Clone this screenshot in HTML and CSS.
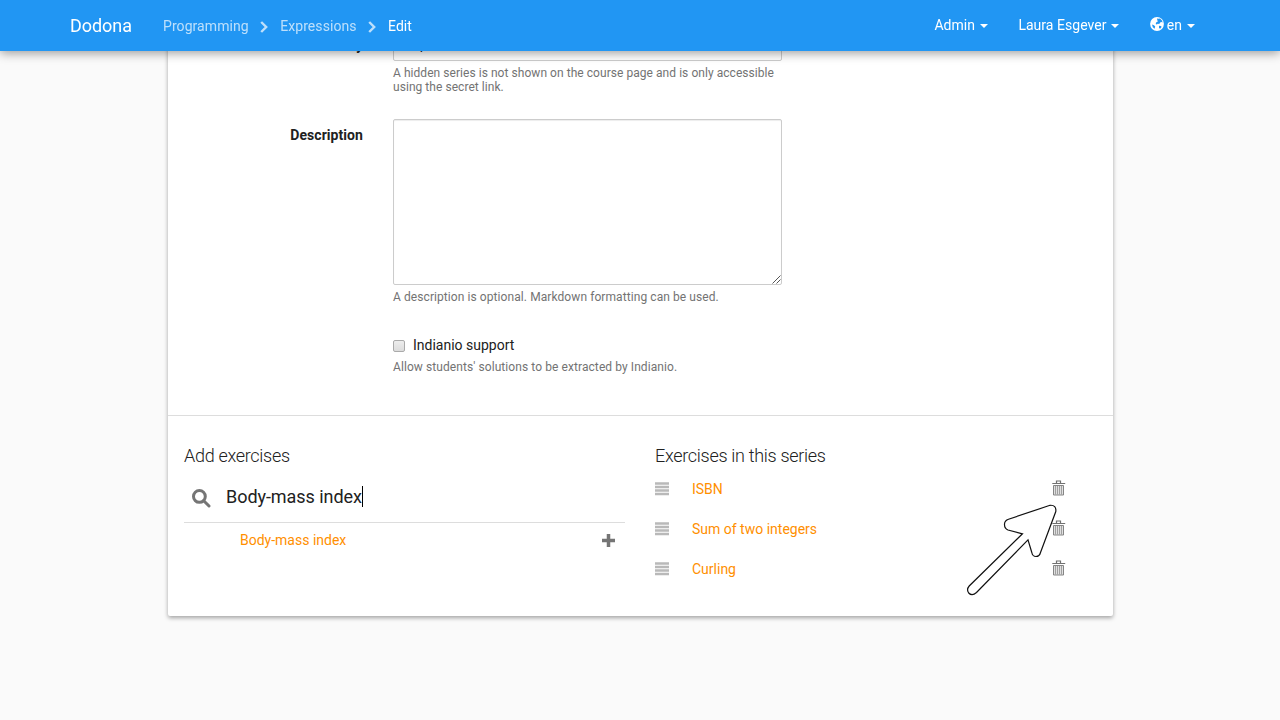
FILE: index.html
```html
<!DOCTYPE html>
<html lang="en">
<head>
<meta charset="utf-8">
<title>Edit - Dodona</title>
<link rel="stylesheet" href="styles.css">
</head>
<body>
<svg class="defs" width="0" height="0">
  <symbol id="bars" viewBox="0 0 14 14"><path d="M0 .3h14v2.500H0zM0 3.800h14v2.500H0zM0 7.300h14v2.500H0zM0 10.800h14v2.500H0z"/></symbol>
  <symbol id="trash" viewBox="0 0 14 16"><path d="M4.500 3V1h4v2M.3 3.500h12.900" fill="none" stroke="#707070" stroke-width="1.2"/><path d="M1.500 5.500h10v9.500h-10z" fill="#e0e0e0" stroke="#858585"/><path d="M3.500 6v8.500M5.500 6v8.500M7.500 6v8.500M9.500 6v8.500" stroke="#999" stroke-width=".9"/></symbol>
</svg>
<nav class="navbar">
  <div class="nav-left">
    <a class="brand">Dodona</a>
    <a class="crumb">Programming</a>
    <svg class="chevron" width="8" height="12" viewBox="0 0 8 12"><path d="M1.200 1l5 5-5 5"/></svg>
    <a class="crumb">Expressions</a>
    <svg class="chevron" width="8" height="12" viewBox="0 0 8 12"><path d="M1.200 1l5 5-5 5"/></svg>
    <a class="crumb current">Edit</a>
  </div>
  <div class="nav-right">
    <a>Admin<span class="caret"></span></a>
    <a>Laura Esgever<span class="caret"></span></a>
    <a><svg class="globe" width="14" height="14" viewBox="0 0 14 14"><circle cx="7" cy="7" r="6.900" fill="#fff"/><path d="M7 1.500l1.700.3 1.300-.3 2 2 .6 2-1.100-.6-1.400.6-.8 1.400-1.600-.1-.8.800-1.200-.7.600-1.600 1.600-.8-.6-1.200zM2 7.500l2 .7 1.200 1.300-.6 2.300-1.800-1.500zM9 8.800l2 .2.600 1-1.500 1.700-1.100-.8z" fill="#2196f3"/></svg>en<span class="caret"></span></a>
  </div>
</nav>
<main class="card">
  <form class="form">
    <div class="row">
      <label class="label">Visibility</label>
      <div class="field"><div class="control">Open</div><p class="help">A hidden series is not shown on the course page and is only accessible using the secret link.</p></div>
    </div>
    <div class="row">
      <label class="label">Description</label>
      <div class="field"><div class="control area"><svg width="9" height="9" viewBox="0 0 9 9"><path d="M.5 8.500l8-8M4.500 8.500l4-4"/></svg></div><p class="help">A description is optional. Markdown formatting can be used.</p></div>
    </div>
    <div class="row">
      <span class="label"></span>
      <div class="field"><div class="check"><span class="box"></span>Indianio support</div><p class="help">Allow students' solutions to be extracted by Indianio.</p></div>
    </div>
  </form>
  <section class="exercises">
    <div class="column">
      <h4>Add exercises</h4>
      <div class="search"><svg width="19" height="19" viewBox="0 0 19 19"><circle cx="7.400" cy="7.400" r="5.900"/><path d="M11.700 11.700l5.300 5.300" stroke-linecap="round"/></svg><span class="query">Body-mass index</span></div>
      <div class="result"><a>Body-mass index</a><svg width="13" height="13" viewBox="0 0 13 13"><path d="M6.500 0v13M0 6.500h13"/></svg></div>
    </div>
    <div class="column">
      <h4>Exercises in this series</h4>
      <div class="item"><svg class="bars"><use href="#bars"/></svg><a>ISBN</a><svg class="trash"><use href="#trash"/></svg></div>
      <div class="item"><svg class="bars"><use href="#bars"/></svg><a>Sum of two integers</a><svg class="trash"><use href="#trash"/></svg></div>
      <div class="item"><svg class="bars"><use href="#bars"/></svg><a>Curling</a><svg class="trash"><use href="#trash"/></svg></div>
    </div>
  </section>
</main>
<svg class="pointer" width="92" height="94" viewBox="0 0 92 94"><path d="M56.500 29.800L42 26Q38.300 24.500 38.500 20Q38.700 16.500 42.500 15.200L84 1.300Q90.500 .8 89.800 7.500L74.500 48.500Q73.500 52.500 70 52.500Q66.500 52.500 65.800 48.500L62 35.800L10.500 88.500Q6 92.500 2.700 89Q.2 85.500 3.200 82Z"/></svg>
</body>
</html>
```
FILE: styles.css
```css
* { box-sizing: border-box; }
body { margin: 0; height: 720px; overflow: hidden; background: #fafafa; color: #212121; font: 14px/20px Roboto, sans-serif; }
.defs, .pointer { position: absolute; }
.navbar { position: fixed; top: 0; left: 0; z-index: 2; width: 1280px; height: 51px; padding: 0 85px 0 70px; display: flex; justify-content: space-between; background: #2196f3; color: #fff; box-shadow: 0 2px 10px rgba(0, 0, 0, .4); }
.nav-left { display: flex; align-items: center; padding-top: 1px; }
.brand { width: 93px; font-size: 18px; letter-spacing: -.05px; }
.crumb { opacity: .7; letter-spacing: .07px; }
.crumb.current { opacity: 1; letter-spacing: 0; }
.chevron { margin: 2px 12px 0 11.500px; opacity: .7; fill: none; stroke: #fff; stroke-width: 2.400; }
.nav-right { display: flex; gap: 30px; align-items: center; padding-bottom: 2px; }
.nav-right a { display: flex; align-items: center; }
.caret { margin: 2px 0 0 5px; border: 4px solid transparent; border-top-color: #fff; border-bottom: 0; }
.nav-right a:nth-child(-n+2) { letter-spacing: .03px; margin-right: .4px; }
.globe { margin: -1px 3px 0 0; }
.card { width: 945px; height: 616px; margin: 0 0 0 168px; padding-top: 27px; background: #fff; border-radius: 2px; box-shadow: 0 2px 4px rgba(0, 0, 0, .35); }
.form { display: flex; flex-direction: column; height: 388px; }
.row { display: flex; gap: 30px; }
.row:first-child { height: 92px; }
.row:nth-child(2) { height: 216px; }
.label { width: 195px; padding-top: 6px; text-align: right; font-weight: 700; letter-spacing: .06px; }
.row:first-child .label { padding-top: 8px; }
.field { width: 389px; }
.control { height: 34px; padding: 6px 16px; border: 1px solid #ccc; border-radius: 2px; box-shadow: inset 0 1px 1px rgba(0, 0, 0, .075); }
.area { display: flex; justify-content: flex-end; align-items: flex-end; height: 166px; padding: 0; }
.area svg { stroke: #555; stroke-width: 1; }
.help { margin: 5px 0 0; color: #737373; font-size: 12px; line-height: 14px; letter-spacing: .08px; }
.row:first-child .help { letter-spacing: .05px; }
.check { display: flex; align-items: center; gap: 8px; height: 20px; }
.box { width: 12px; height: 12px; margin-top: 2px; border: 1px solid #aaa; border-radius: 2px; background: linear-gradient(#ededed, #dcdcdc); }
.exercises { display: flex; gap: 30px; border-top: 1px solid #ddd; padding: 30px 16px 0; }
.column { width: 441px; }
h4 { margin: 0; font-size: 18px; line-height: 20px; font-weight: 300; letter-spacing: -.3px; }
.search { display: flex; align-items: center; height: 57px; padding: 8px 8px 0; border-bottom: 1px solid #ddd; }
.search svg { margin-right: 15px; fill: none; stroke: #757575; stroke-width: 3; }
.query { font-size: 18px; line-height: 21px; border-right: 1px solid #000; margin-top: -4px; letter-spacing: -.05px; }
a { text-decoration: none; }
.column a { color: #ff8f00; }
.result { display: flex; align-items: center; justify-content: space-between; height: 33px; padding: 0 10px 0 56px; }
.result svg { stroke: #757575; stroke-width: 3.5; margin-top: 2px; }
.item { display: flex; align-items: center; height: 40px; }
.item:first-of-type { margin-top: 3px; }
.bars { width: 14px; height: 14px; margin-right: 23px; fill: #b9b9b9; }
.trash { width: 14px; height: 16px; margin-top: -2px; margin-left: auto; margin-right: 30px; }
.pointer { left: 966px; top: 504px; overflow: visible; fill: #fff; stroke: #111; stroke-width: 1.2; }
```
